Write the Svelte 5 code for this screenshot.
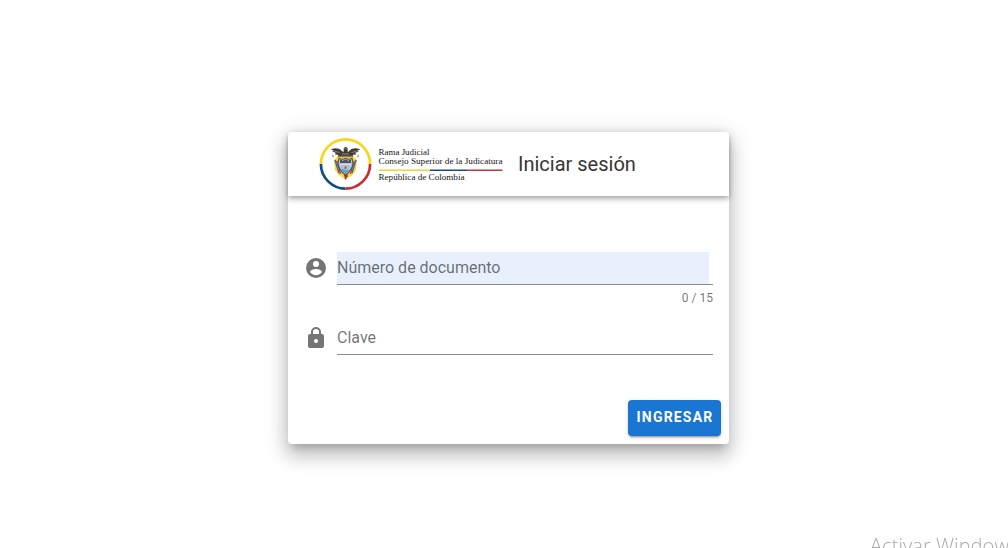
<script>
  let documento = $state('');
  let clave = $state('');
</script>

<main>
  <form class="card" onsubmit={(e) => e.preventDefault()}>
    <header class="toolbar">
      <svg class="logo" viewBox="0 0 186 56" width="186" height="56" role="img" aria-label="Rama Judicial">
        <g fill="none" stroke-width="2.7">
          <path d="M2.900 28a24.600 24.600 0 0 1 49.200 0" stroke="#f8d71b" />
          <path d="M2.900 28a24.600 24.600 0 0 0 24.600 24.600" stroke="#134a8b" />
          <path d="M27.500 52.600A24.600 24.600 0 0 0 52.100 28" stroke="#cb2b32" />
        </g>
        <g>
          <path d="M14.500 19l1 2M40.500 19l-1 2" fill="none" stroke="#c66a76" stroke-width="1.200" />
          <path d="M16 24l4-4h15l4 4-1 10-3.500 5-7 4.500-7-4.500-3.500-5z" fill="#efdc3e" />
          <path d="M17 24l2.500 8 1.500 5M38 24l-2.500 8-1.500 5" fill="none" stroke="#4b66a5" stroke-width="1.500" />
          <path d="M18.500 25l2.500 7 1.500 6M36.500 25l-2.500 7-1.500 6" fill="none" stroke="#bf4040" stroke-width="1.300" />
          <path d="M12.800 13.500c4-2 8-1.500 10.200.7l2.500 2 .3-4.200 1.700-1.200 2 1.200.3 4.200 2.200-2c2.500-2.200 6-2.700 10.200-.7l-3.200 1.300 1.700 1-3.500 1 1 1.700-3.500.3.500 1.700-3.700.5h-8l-3.700-.5.500-1.700-3.500-.3 1-1.700-3.500-1 1.700-1z" fill="#413a35" />
          <path d="M16.500 15.300l5 1.200M38.500 15.300l-5 1.200M26.500 12.500l2 .5M24 18h7" stroke="#a49b90" stroke-width=".8" />
          <path d="M21 22.500q3.500 1.500 6.500 0 3.500 1.500 6.500 0 2 5-.5 10-2 4-6 6.500-4-2.500-6-6.500-2.500-5-.5-10z" fill="#9fc8e2" stroke="#5f4a4f" stroke-width="1.100" />
          <path d="M22 23.500q2.800 1 5.500 0 2.800 1 5.500 0v3.500h-11z" fill="#52536b" />
          <path d="M24 24.500h1.500M29.500 24.500h1.500" stroke="#c6a84f" />
          <path d="M22 28.500h11" stroke="#d9dce0" stroke-width="1.200" />
          <path d="M26 31.500l1.500-2 1.500 2-.5 1.500h-2z" fill="#cb6868" />
          <path d="M22.500 33.500q2-1 4 0t5.500 0l-2 3-2.500 1.700-2.500-1.700z" fill="#5ea3cb" />
          <path d="M20.500 20.500h14" stroke="#8e7952" stroke-width="1.500" />
          <path d="M25.800 38.500h4v2.300l-1.300.6-.4 2.300-1.300-.7-.2-2z" fill="#a8323b" />
        </g>
        <g font-family="'Liberation Serif', serif" font-size="8.600" fill="#161616">
          <text x="60.500" y="19.300" textLength="51" lengthAdjust="spacingAndGlyphs">Rama Judicial</text>
          <text x="60.500" y="28.300" textLength="124" lengthAdjust="spacingAndGlyphs">Consejo Superior de la Judicatura</text>
          <text x="60.500" y="44.300" textLength="86" lengthAdjust="spacingAndGlyphs">República de Colombia</text>
        </g>
        <path d="M61 34.300h51" stroke="#ead63c" stroke-width="1.400" />
        <path d="M112 34.300h37" stroke="#1f4684" stroke-width="1.400" />
        <path d="M149 34.300h35.500" stroke="#c0343d" stroke-width="1.400" />
      </svg>
      <h1>Iniciar sesión</h1>
    </header>

    <div class="fields">
      <div class="row">
        <svg class="icon" viewBox="0 0 24 24"><path d="M12 2A10 10 0 0 0 2 12A10 10 0 0 0 12 22A10 10 0 0 0 22 12A10 10 0 0 0 12 2M12 19.200C9.500 19.200 7.290 17.920 6 16C6.030 14 10 12.900 12 12.900C14 12.900 17.970 14 18 16C16.710 17.920 14.500 19.200 12 19.200M12 5A3 3 0 0 1 15 8A3 3 0 0 1 12 11A3 3 0 0 1 9 8A3 3 0 0 1 12 5Z" /></svg>
        <div class="control">
          <input class="filled" type="text" maxlength="15" placeholder="Número de documento" bind:value={documento} />
        </div>
      </div>
      <div class="counter">{documento.length} / 15</div>
      <div class="row">
        <svg class="icon" viewBox="0 0 24 24"><path d="M12 17A2 2 0 0 0 14 15C14 13.890 13.100 13 12 13A2 2 0 0 0 10 15A2 2 0 0 0 12 17M18 8A2 2 0 0 1 20 10V20A2 2 0 0 1 18 22H6A2 2 0 0 1 4 20V10C4 8.890 4.900 8 6 8H7V6A5 5 0 0 1 12 1A5 5 0 0 1 17 6V8H18M12 3A3 3 0 0 0 9 6V8H15V6A3 3 0 0 0 12 3Z" /></svg>
        <div class="control">
          <input type="password" placeholder="Clave" bind:value={clave} />
        </div>
      </div>
    </div>

    <footer>
      <button type="submit">Ingresar</button>
    </footer>
  </form>
</main>
<div class="watermark">Activar Windows</div>

<style>
  :global(body) {
    background: #fff;
    overflow: hidden;
  }

  main {
    box-sizing: border-box;
    height: 548px;
    padding: 132px 279px 0 288px;
    font-family: Roboto, sans-serif;
  }

  .card {
    display: flex;
    flex-direction: column;
    width: 441px;
    height: 312px;
    border-radius: 4px;
    background: #fff;
    box-shadow:
      0 7px 8px -4px rgba(0, 0, 0, 0.2),
      0 12px 17px 2px rgba(0, 0, 0, 0.14),
      0 5px 22px 4px rgba(0, 0, 0, 0.12);
  }

  .toolbar {
    display: flex;
    align-items: center;
    box-sizing: border-box;
    height: 64px;
    flex: none;
    padding: 0 30px;
    border-radius: 4px 4px 0 0;
    background: #fff;
    box-shadow:
      0 2px 4px -1px rgba(0, 0, 0, 0.2),
      0 4px 5px 0 rgba(0, 0, 0, 0.14),
      0 1px 10px 0 rgba(0, 0, 0, 0.12);
  }

  .logo {
    flex: none;
  }

  h1 {
    margin: 0 0 0 14px;
    font-size: 20px;
    font-weight: 400;
    line-height: 30px;
    color: #363636;
  }

  .fields {
    padding: 56px 16px 0;
  }

  .row {
    display: flex;
    height: 33px;
  }

  .icon {
    flex: none;
    width: 24px;
    height: 24px;
    margin: 4px 9px 0 0;
    fill: #757575;
  }

  .control {
    flex: 1;
    padding-right: 4px;
    border-bottom: 1px solid #8c8c8c;
  }

  input {
    display: block;
    box-sizing: border-box;
    width: 100%;
    height: 32px;
    padding: 0 0 2px;
    border: 0;
    outline: 0;
    background: transparent;
    font: 16px/20px Roboto, sans-serif;
    color: rgba(0, 0, 0, 0.87);
  }

  input::placeholder {
    color: rgba(0, 0, 0, 0.56);
    opacity: 1;
  }

  .filled {
    background: #e8f0fe;
  }

  .counter {
    box-sizing: border-box;
    height: 32px;
    padding-top: 7px;
    margin-bottom: 5px;
    font-size: 12px;
    line-height: 12px;
    text-align: right;
    color: rgba(0, 0, 0, 0.56);
  }

  footer {
    display: flex;
    justify-content: flex-end;
    margin-top: auto;
    padding: 8px;
  }

  button {
    width: 93px;
    height: 36px;
    padding: 0 0 2px 1px;
    border: 0;
    border-radius: 4px;
    background: #1976d2;
    color: #fff;
    font: 700 14px/34px Roboto, sans-serif;
    letter-spacing: 1.2px;
    text-transform: uppercase;
    box-shadow:
      0 3px 1px -2px rgba(0, 0, 0, 0.2),
      0 2px 2px 0 rgba(0, 0, 0, 0.14),
      0 1px 5px 0 rgba(0, 0, 0, 0.12);
  }

  .watermark {
    position: fixed;
    left: 870px;
    top: 531px;
    font: 300 20.200px/28px 'Open Sans', sans-serif;
    white-space: nowrap;
    color: #aaa;
  }
</style>
